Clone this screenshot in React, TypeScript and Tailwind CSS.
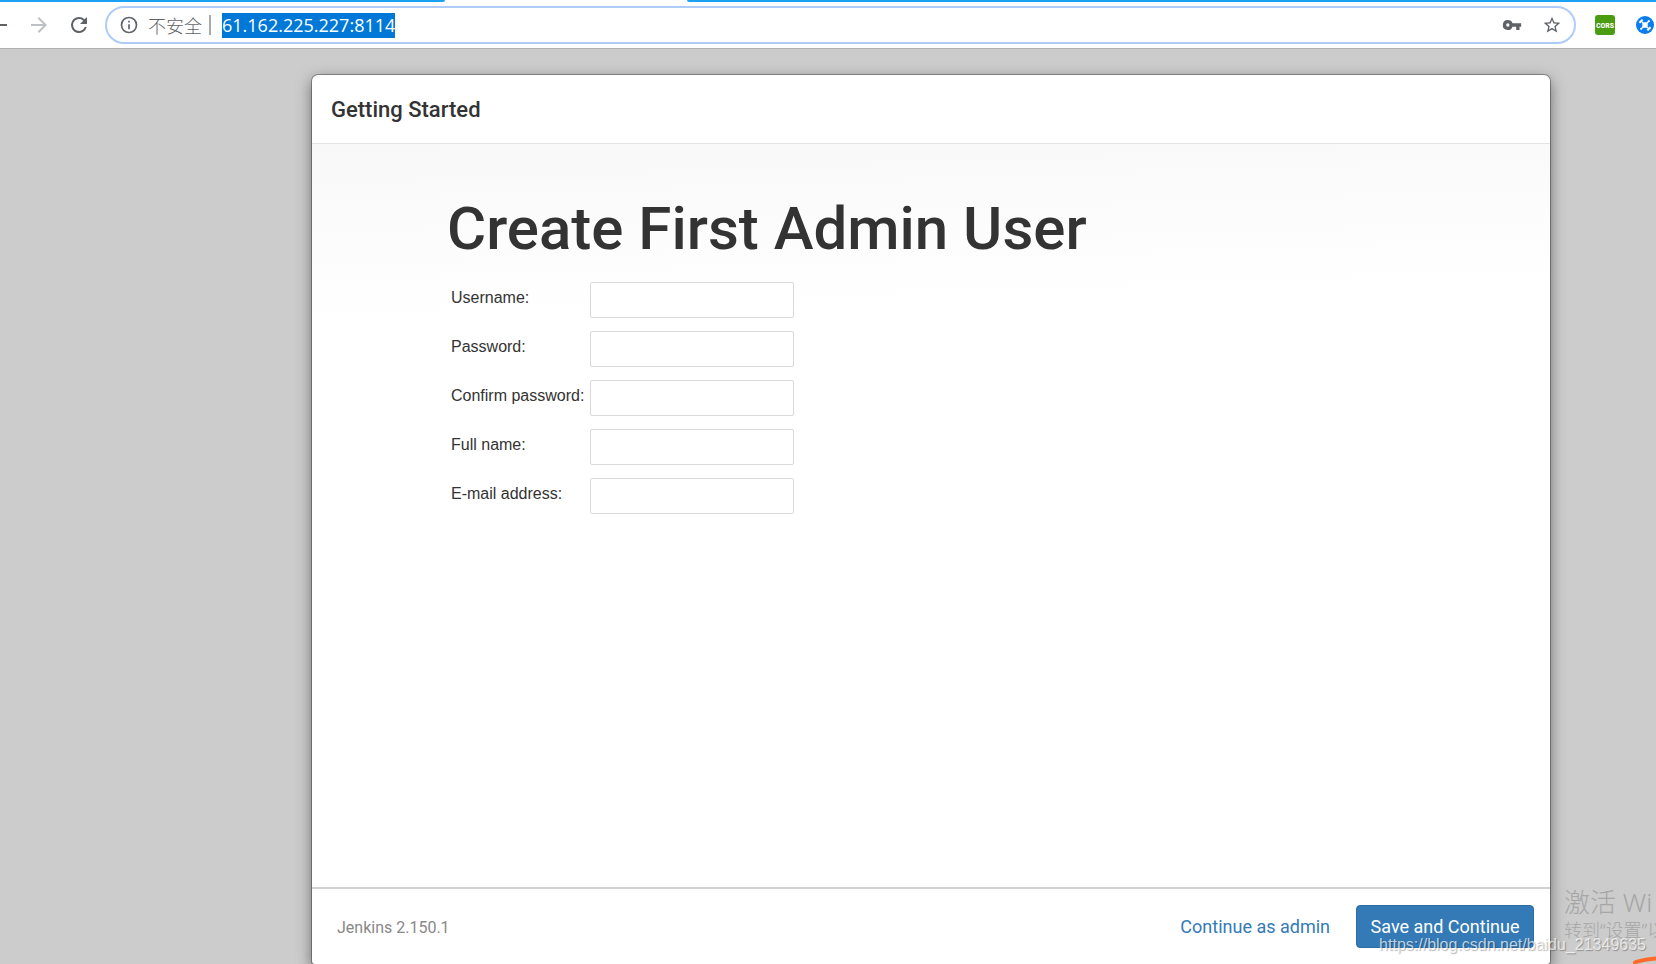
import React from "react";

const fields = [
  { id: "username", label: "Username:", type: "text" },
  { id: "password1", label: "Password:", type: "password" },
  { id: "password2", label: "Confirm password:", type: "password" },
  { id: "fullname", label: "Full name:", type: "text" },
  { id: "email", label: "E-mail address:", type: "text" },
];

function BrowserBar() {
  return (
    <header className="shrink-0 border-b border-[#b1b1b1] bg-white">
      <div className="flex h-[2px]">
        <div className="w-[445px] rounded-br-[2px] bg-[#1ba1f2]" />
        <div className="w-[242px]" />
        <div className="flex-1 rounded-bl-[2px] bg-[#1ba1f2]" />
      </div>
      <div className="flex h-[46px] items-center">
        <button aria-label="Back" className="h-6 w-[27px] overflow-hidden">
          <svg viewBox="0 0 27 24" className="h-6 w-[27px]">
            <path d="M0 12h7" stroke="#5f6368" strokeWidth="2" />
          </svg>
        </button>
        <button aria-label="Forward" className="w-10">
          <svg viewBox="0 0 24 24" className="h-6 w-6" fill="#bdc1c6">
            <path d="M12 4l-1.41 1.41L16.17 11H4v2h12.17l-5.58 5.59L12 20l8-8z" />
          </svg>
        </button>
        <button aria-label="Reload" className="w-[38px]">
          <svg viewBox="0 0 24 24" className="h-6 w-6" fill="#5f6368">
            <path d="M17.65 6.35A7.96 7.96 0 0 0 12 4a8 8 0 1 0 7.73 10h-2.08A6 6 0 1 1 12 6c1.66 0 3.14.69 4.22 1.78L13 11h7V4z" />
          </svg>
        </button>
        <div className="flex h-[38px] flex-1 items-center rounded-full border-2 border-[#aecbfa] pr-3 pl-3">
          <svg viewBox="0 0 24 24" className="h-5 w-5" fill="#5f6368">
            <path d="M11 17h2v-6h-2zm1-15a10 10 0 1 0 0 20 10 10 0 0 0 0-20zm0 18a8 8 0 1 1 0-16 8 8 0 0 1 0 16zM11 9h2V7h-2z" />
          </svg>
          <span className="ml-[9px] font-['Noto_Sans_CJK_SC',sans-serif] text-lg leading-6 font-light text-[#5f6368]">
            不安全
          </span>
          <span className="ml-[7px] h-5 w-[2px] bg-[#a8abae]" />
          <span className="ml-[11px] bg-[#0078d7] font-['Open_Sans','Noto_Sans',sans-serif] text-lg leading-[25px] text-white">
            61.162.225.227:8114
          </span>
          <span className="flex-1" />
          <button aria-label="Saved passwords">
            <svg viewBox="0 0 24 24" className="h-5 w-5" fill="#5f6368">
              <path d="M12.65 10A5.99 5.99 0 0 0 7 6a6 6 0 1 0 5.65 8H17v4h4v-4h2v-4zM7 14a2 2 0 1 1 0-4 2 2 0 0 1 0 4z" />
            </svg>
          </button>
          <button aria-label="Bookmark this page" className="ml-5">
            <svg viewBox="0 0 24 24" className="h-5 w-5" fill="#5f6368">
              <path d="M22 9.24l-7.19-.62L12 2 9.19 8.63 2 9.24l5.46 4.73L5.82 21 12 17.27 18.18 21l-1.63-7.03zM12 15.4l-3.76 2.27 1-4.28-3.32-2.88 4.38-.38L12 6.1l1.71 4.04 4.38.38-3.32 2.88 1 4.28z" />
            </svg>
          </button>
        </div>
        <button aria-label="CORS extension" className="ml-[19px] h-5 w-5 rounded-[3px] bg-[#4a9c10]">
          <svg viewBox="0 0 20 20" className="h-5 w-5">
            <text
              x="10"
              y="13"
              textAnchor="middle"
              fontSize="8"
              fontWeight="700"
              fill="#fff"
              fontFamily="Liberation Sans Narrow, Roboto Condensed, Roboto, sans-serif"
            >
              CORS
            </text>
          </svg>
        </button>
        <button aria-label="Proxy extension" className="mr-[2px] ml-[21px]">
          <svg viewBox="0 0 18 18" className="h-[18px] w-[18px]">
            <circle cx="9" cy="9" r="9" fill="#0a7cf0" />
            <path d="M5.5 5.5l7 7M12.5 5.5l-7 7" stroke="#fff" strokeWidth="1.2" />
            <rect x="6.3" y="6.3" width="5.4" height="5.4" rx="1.6" fill="#fff" />
            <path d="M3.4 6.8L6.6 3.6M14.6 11.2l-3.2 3.2" stroke="#fff" strokeWidth="2" />
            <circle cx="12.8" cy="5.2" r="1.1" fill="#fff" />
            <circle cx="5.2" cy="12.8" r="1.1" fill="#fff" />
          </svg>
        </button>
      </div>
    </header>
  );
}

export default function App() {
  return (
    <div className="relative flex h-screen flex-col overflow-hidden bg-[#cccccc] font-[Roboto,sans-serif] text-[#333333]">
      <BrowserBar />
      <div className="flex min-h-0 flex-1 pt-[26px] pr-[106px] pl-[312px]">
        <main className="flex flex-1 flex-col rounded-t-[6px] rounded-b-[3px] bg-white shadow-[0_0_0_1px_rgba(0,0,0,0.3),0_5px_15px_rgba(0,0,0,0.5)]">
          <div className="flex h-[69px] shrink-0 items-center border-b border-[#e5e5e5] px-[19px] pt-[2px]">
            <h4 className="text-[22px] leading-8 font-medium">Getting Started</h4>
          </div>
          <form className="flex min-h-0 flex-1 flex-col" onSubmit={(e) => e.preventDefault()}>
            <div className="flex-1 bg-[linear-gradient(178deg,#f8f8f8_0px,#ffffff_180px)] px-[135px] pt-[52px]">
              <h1 className="text-[60px] leading-[66px] font-medium">Create First Admin User</h1>
              <table className="mt-[20px] font-['Liberation_Sans',Arial,sans-serif] text-base">
                <tbody>
                  {fields.map((f) => (
                    <tr key={f.id} className="h-[49px] align-top">
                      <td className="w-[143px] pt-1 pl-1">
                        <label htmlFor={f.id} className="whitespace-nowrap">
                          {f.label}
                        </label>
                      </td>
                      <td>
                        <input
                          id={f.id}
                          type={f.type}
                          className="block h-9 w-[204px] rounded-[2px] border border-[#d9d9d9] bg-white px-2"
                        />
                      </td>
                    </tr>
                  ))}
                </tbody>
              </table>
            </div>
            <div className="flex h-[77px] shrink-0 items-center border-t-2 border-[#d2d2d2] pr-4 pl-[25px]">
              <span className="flex-1 pt-[2px] text-base text-[#888888]">Jenkins 2.150.1</span>
              <a href="#admin" className="text-lg text-[#337ab7]">
                Continue as admin
              </a>
              <button
                type="submit"
                className="ml-[26px] h-[43px] w-[178px] rounded-[4px] border border-[#2e6da4] bg-[#337ab7] text-lg text-white"
              >
                Save and Continue
              </button>
            </div>
          </form>
        </main>
      </div>

      <div className="absolute top-[886px] left-[1564px] font-['Noto_Sans','Noto_Sans_CJK_SC',sans-serif] font-light whitespace-nowrap text-[#a6a6a6]">
        <p className="text-[26px] leading-8">激活 Wi</p>
        <p className="text-lg leading-6">转到“设置”以</p>
      </div>
      <p className="absolute right-[10px] bottom-[7px] font-['Liberation_Sans',Arial,sans-serif] text-base leading-6 whitespace-nowrap text-white/70 [text-shadow:1px_1px_1px_rgba(0,0,0,0.3)]">
        https://blog.csdn.net/baidu_21349635
      </p>
      <svg viewBox="0 0 24 8" className="absolute right-0 bottom-0 h-2 w-6">
        <path d="M1 8V6.500C1 5 2 4.500 4 4C10 2 17 1 24 .5V4.500C17 5 10 6 4 8z" fill="#ff6a2b" />
      </svg>
    </div>
  );
}
